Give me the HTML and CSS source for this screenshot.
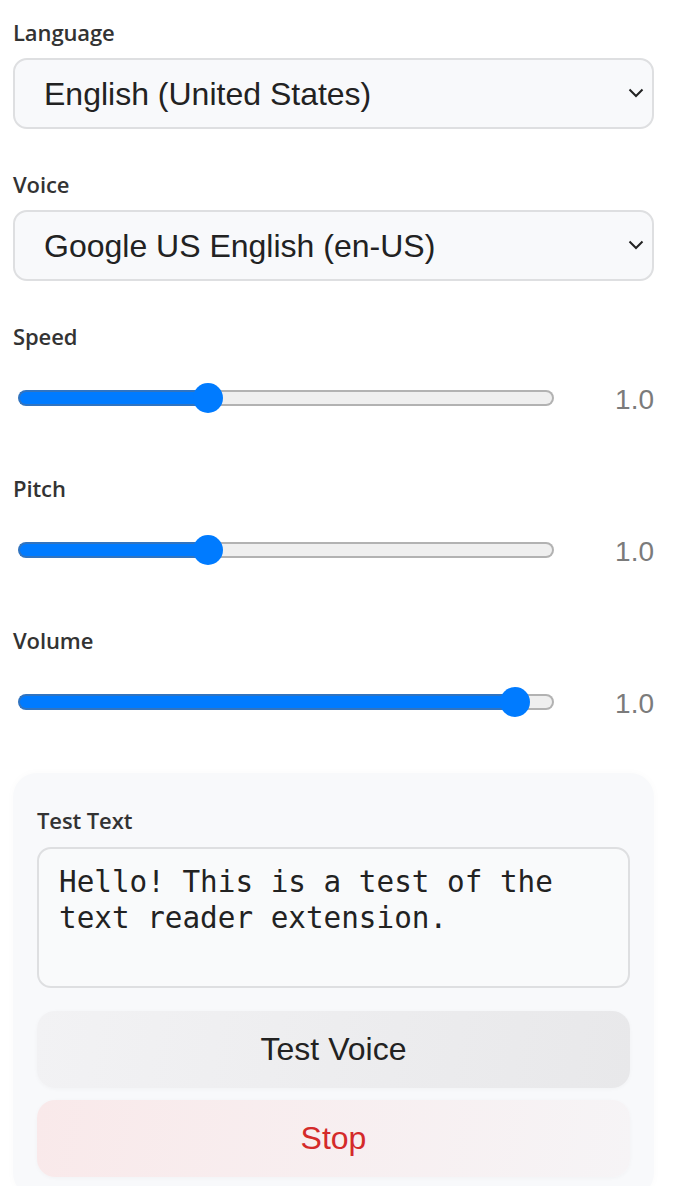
FILE: index.html
```html
<!DOCTYPE html>
<html lang="en">
<head>
<meta charset="utf-8">
<title>Text Reader Settings</title>
<link rel="stylesheet" href="styles.css">
</head>
<body>
<main class="panel">
  <div class="field">
    <label class="label" for="lang">Language</label>
    <div class="select-wrap">
      <select id="lang" class="select"><option>English (United States)</option></select>
      <svg class="chev" width="16" height="10" viewBox="0 0 16 10"><polyline points="1.5,1.5 8,8 14.5,1.5" fill="none" stroke="#222" stroke-width="2"/></svg>
    </div>
  </div>
  <div class="field">
    <label class="label" for="voice">Voice</label>
    <div class="select-wrap">
      <select id="voice" class="select"><option>Google US English (en-US)</option></select>
      <svg class="chev" width="16" height="10" viewBox="0 0 16 10"><polyline points="1.5,1.5 8,8 14.5,1.5" fill="none" stroke="#222" stroke-width="2"/></svg>
    </div>
  </div>
  <div class="field slider-field">
    <div class="label">Speed</div>
    <div class="slider-row">
      <div class="slider" style="--pos:190px">
        <div class="track"><div class="fill"></div><div class="rest"></div></div>
        <span class="thumb"></span>
      </div>
      <span class="value">1.0</span>
    </div>
  </div>
  <div class="field slider-field">
    <div class="label">Pitch</div>
    <div class="slider-row">
      <div class="slider" style="--pos:190px">
        <div class="track"><div class="fill"></div><div class="rest"></div></div>
        <span class="thumb"></span>
      </div>
      <span class="value">1.0</span>
    </div>
  </div>
  <div class="field slider-field">
    <div class="label">Volume</div>
    <div class="slider-row">
      <div class="slider" style="--pos:497px">
        <div class="track"><div class="fill"></div><div class="rest"></div></div>
        <span class="thumb"></span>
      </div>
      <span class="value">1.0</span>
    </div>
  </div>
  <section class="card">
    <label class="label" for="test">Test Text</label>
    <textarea id="test" class="textarea">Hello! This is a test of the text reader extension.</textarea>
    <button class="btn btn-test">Test Voice</button>
    <button class="btn btn-stop">Stop</button>
  </section>
</main>
</body>
</html>
```
FILE: styles.css
```css
html, body {
  margin: 0;
  padding: 0;
  background: #ffffff;
}
body {
  font-family: "Liberation Sans", Arial, sans-serif;
  color: #222;
  overflow: hidden;
}
.panel {
  padding: 18px 24px 0 13px;
}
.label {
  display: block;
  font-family: "Open Sans", "Noto Sans", sans-serif;
  font-weight: 600;
  font-size: 22px;
  line-height: 28px;
  color: #333;
  letter-spacing: -0.1px;
}
.field {
  margin-bottom: 41px;
}
.field .label {
  margin-bottom: 12px;
}
.select-wrap {
  position: relative;
}
.select {
  appearance: none;
  -webkit-appearance: none;
  display: block;
  width: 100%;
  height: 71px;
  box-sizing: border-box;
  border: 2px solid #dedfe1;
  border-radius: 14px;
  background: #f8f9fb;
  padding: 0 40px 0 29px;
  font-family: "Liberation Sans", Arial, sans-serif;
  font-size: 32px;
  color: #222;
  outline: none;
}
.chev {
  position: absolute;
  right: 10px;
  top: 30px;
  pointer-events: none;
}
.slider-field {
  margin-bottom: 56px;
}
.slider-field .label {
  margin-bottom: 28px;
}
.slider-row {
  display: flex;
  align-items: center;
  height: 40px;
  padding-left: 5px;
}
.slider {
  position: relative;
  flex: 1;
  height: 40px;
  display: flex;
  align-items: center;
}
.track {
  display: flex;
  width: 100%;
  height: 16px;
}
.fill {
  width: var(--pos);
  box-sizing: border-box;
  background: #007bff;
  border: 2px solid #3174c0;
  border-right: 0;
  border-radius: 8px 0 0 8px;
}
.rest {
  flex: 1;
  box-sizing: border-box;
  background: #efefef;
  border: 2px solid #b2b2b2;
  border-left: 0;
  border-radius: 0 8px 8px 0;
}
.thumb {
  position: absolute;
  top: 5px;
  left: calc(var(--pos) - 15px);
  width: 30px;
  height: 30px;
  border-radius: 50%;
  background: #007bff;
}
.value {
  width: 40px;
  margin-left: 60px;
  text-align: right;
  font-family: "Liberation Sans", Arial, sans-serif;
  font-size: 28px;
  color: #7b7b7b;
  position: relative;
  top: 2px;
}
.card {
  margin-top: -5px;
  background: #f8f9fb;
  border-radius: 24px;
  padding: 33px 24px 20px 24px;
  box-shadow: 0 0 8px rgba(0, 0, 0, 0.025);
  display: flex;
  flex-direction: column;
}
.card .label {
  margin-bottom: 13px;
}
.textarea {
  display: block;
  height: 141px;
  box-sizing: border-box;
  border: 2px solid #dedfe1;
  border-radius: 14px;
  background: #f9fafb;
  padding: 15px 20px;
  font-family: "DejaVu Sans Mono", "Liberation Mono", monospace;
  font-size: 29.3px;
  line-height: 36px;
  color: #222;
  resize: none;
  outline: none;
  margin-bottom: 23px;
}
.btn {
  display: block;
  height: 77px;
  border: 0;
  border-radius: 18px;
  font-family: "Liberation Sans", Arial, sans-serif;
  font-size: 32px;
  box-shadow: 0 1px 4px rgba(0, 0, 0, 0.03);
}
.btn-test {
  background: linear-gradient(100deg, #f2f2f4, #e8e8ea);
  color: #222;
  margin-bottom: 12px;
}
.btn-stop {
  background: linear-gradient(100deg, #f9e9ea, #f6f4f6);
  color: #d42a2a;
}
```
